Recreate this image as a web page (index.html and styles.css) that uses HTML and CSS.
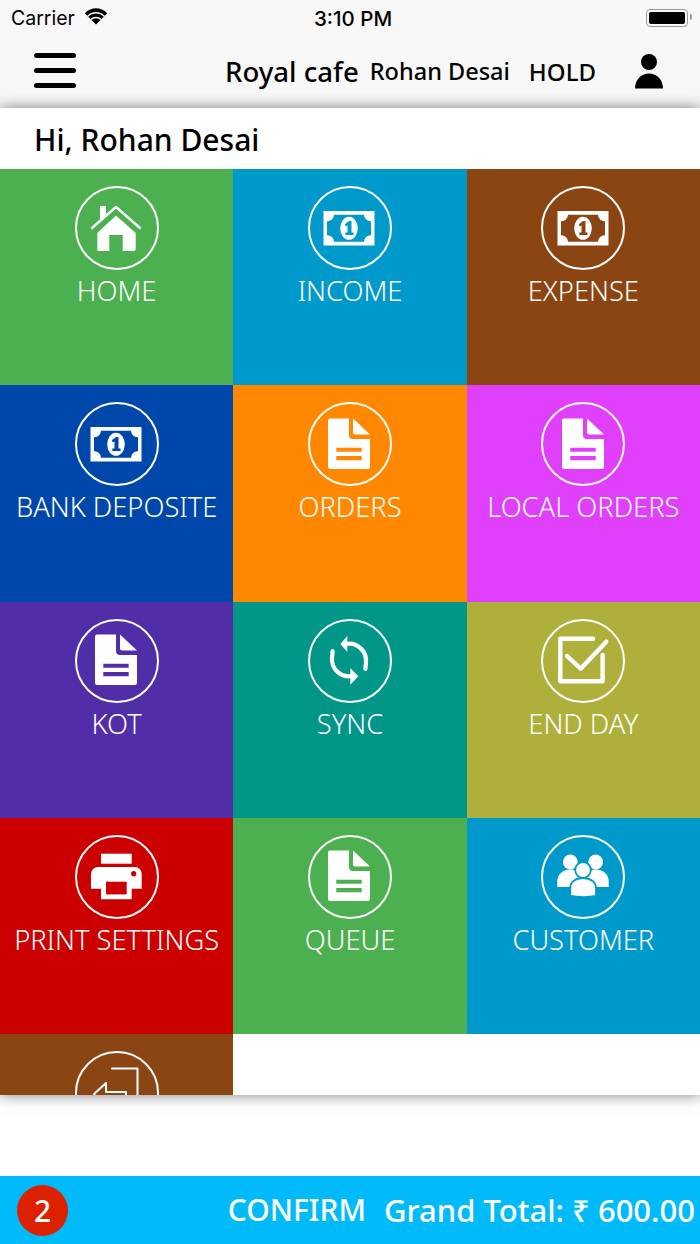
FILE: index.html
```html
<!DOCTYPE html>
<html lang="en">
<head>
  <meta charset="UTF-8" />
  <meta name="viewport" content="width=device-width, initial-scale=1.0" />
  <title>Royal cafe</title>
  <link rel="stylesheet" href="styles.css">
</head>
<body>
  <svg class="defs" width="0" height="0" aria-hidden="true">
    <symbol id="i-home" viewBox="0 0 84 84">
      <path class="fill" d="M26 20h6v8l-6 6z"/>
      <path class="line" d="M18 42L42 21l24 21" stroke-width="2.4"/>
      <path class="fill" fill-rule="evenodd" d="M42 29.5L61.7 47v16a2 2 0 0 1-2 2H24.300a1 1 0 0 1-1-1V47zM35.300 49v16h13.400V49z"/>
    </symbol>
    <symbol id="i-money" viewBox="0 0 84 84">
      <rect class="fill" x="16.500" y="25" width="51" height="34.500"/>
      <path class="hole" d="M27 28.800H57a6.500 6.500 0 0 0 7 6.500V49.200a6.500 6.500 0 0 0-7 6.500H27a6.500 6.500 0 0 0-7-6.500V35.300a6.500 6.500 0 0 0 7-6.500z"/>
      <ellipse class="fill" cx="42" cy="42.300" rx="8.800" ry="11.500"/>
      <path class="hole" d="M37.800 38.200l4.200-3.200h2.500v11.500h2v2.500h-8.200v-2.500h2.200v-7l-1.700 1z"/>
    </symbol>
    <symbol id="i-doc" viewBox="0 0 84 84">
      <path class="fill" fill-rule="evenodd" d="M23 16.500h19V33a4 4 0 0 0 4 4h17v28a2 2 0 0 1-2 2H23a2 2 0 0 1-2-2V18.500a2 2 0 0 1 2-2zM29.300 45.700v4h25.400v-4zM29.300 54v4.300h25.400V54z"/>
      <path class="fill" d="M46 16.500L63 32.500H48a2 2 0 0 1-2-2z"/>
    </symbol>
    <symbol id="i-sync" viewBox="0 0 84 84">
      <path class="line" d="M39 26A17 17 0 0 1 59 44l-.6 7" stroke-width="4.200" stroke-linecap="butt"/>
      <path class="fill" d="M40.300 18v16l-7-8z"/>
      <path class="line" d="M45 58A17 17 0 0 1 25 40l.6-7" stroke-width="4.200" stroke-linecap="butt"/>
      <path class="fill" d="M43.300 50v16.700l8-8.500z"/>
    </symbol>
    <symbol id="i-check" viewBox="0 0 84 84">
      <path class="line" d="M52 20.800H19.300V63.200H61.600V37" stroke-width="4.400"/>
      <path class="line" d="M26 38l13.700 12.700L65.300 23.700" stroke-width="4.400"/>
    </symbol>
    <symbol id="i-print" viewBox="0 0 84 84">
      <rect class="fill" x="27" y="19.700" width="30.700" height="10"/>
      <path class="fill" d="M24 33h37a6.700 6.700 0 0 1 6.700 6.700V54.700H57.700V65.300H27V54.700H17V40a7 7 0 0 1 7-7z"/>
      <rect class="hole" x="32" y="47.700" width="20.700" height="12.700"/>
      <circle class="hole" cx="59.700" cy="39.700" r="2.600"/>
    </symbol>
    <symbol id="i-people" viewBox="0 0 84 84">
      <circle class="fill" cx="29.300" cy="28" r="7.400"/>
      <circle class="fill" cx="54.700" cy="28" r="7.400"/>
      <path class="fill" d="M16.300 53v-6c0-7 6-11.500 13-11.500s13 4.500 13 11.500v6zM41.700 53v-6c0-7 6-11.500 13-11.500s13 4.500 13 11.500v6z"/>
      <path class="pad" d="M29.300 62V54c0-6 5-10 12.700-10s13 4 13 10v8c-8 1.500-17 1.500-25.700 0z"/>
      <circle class="pad" cx="42" cy="36" r="7.800"/>
    </symbol>
    <symbol id="i-logout" viewBox="0 0 84 84">
      <path class="line" d="M38 17.500H63.500V66H38" stroke-width="2"/>
      <path class="line" d="M20 43L32 32V41H52V53H32V62z" stroke-width="2"/>
    </symbol>
  </svg>

  <div class="phone">
    <!-- Status bar + nav -->
    <header class="top">
      <div class="status">
        <div class="status-left">
          <span>Carrier</span>
          <svg class="wifi" width="24" height="18" viewBox="0 0 24 18">
            <path d="M12 17.500L.8 6.300C7-.3 17-.3 23.200 6.300z" fill="#000"/>
            <path d="M3.800 9.300a11.500 11.500 0 0 1 16.400 0" fill="none" stroke="#f8f8f8" stroke-width="1.500"/>
            <path d="M7 12.500a7 7 0 0 1 10 0" fill="none" stroke="#f8f8f8" stroke-width="1.500"/>
          </svg>
        </div>
        <span class="clock">3:10 PM</span>
        <div class="battery"><i></i></div>
      </div>
      <nav class="nav">
        <div class="burger"><i></i><i></i><i></i></div>
        <div class="nav-right">
          <span class="shop">Royal cafe</span>
          <span class="user">Rohan Desai</span>
          <span class="hold">HOLD</span>
          <svg class="person" width="30" height="36" viewBox="0 0 30 36">
            <circle cx="15" cy="9" r="8"/>
            <path d="M1 35.500C1 27 7 20.500 15 20.500S29 27 29 35.500z"/>
          </svg>
        </div>
      </nav>
    </header>

    <main class="panel">
      <h1 class="hello">Hi, Rohan Desai</h1>
      <div class="tiles">
        <a class="tile c-green"><span class="ring"><svg><use href="#i-home"/></svg></span><span class="name">HOME</span></a>
        <a class="tile c-blue"><span class="ring"><svg><use href="#i-money"/></svg></span><span class="name">INCOME</span></a>
        <a class="tile c-brown"><span class="ring"><svg><use href="#i-money"/></svg></span><span class="name">EXPENSE</span></a>
        <a class="tile c-navy"><span class="ring"><svg><use href="#i-money"/></svg></span><span class="name">BANK DEPOSITE</span></a>
        <a class="tile c-orange"><span class="ring"><svg><use href="#i-doc"/></svg></span><span class="name">ORDERS</span></a>
        <a class="tile c-pink"><span class="ring"><svg><use href="#i-doc"/></svg></span><span class="name">LOCAL ORDERS</span></a>
        <a class="tile c-purple"><span class="ring"><svg><use href="#i-doc"/></svg></span><span class="name">KOT</span></a>
        <a class="tile c-teal"><span class="ring"><svg><use href="#i-sync"/></svg></span><span class="name">SYNC</span></a>
        <a class="tile c-olive"><span class="ring"><svg><use href="#i-check"/></svg></span><span class="name">END DAY</span></a>
        <a class="tile c-red"><span class="ring"><svg><use href="#i-print"/></svg></span><span class="name">PRINT SETTINGS</span></a>
        <a class="tile c-green"><span class="ring"><svg><use href="#i-doc"/></svg></span><span class="name">QUEUE</span></a>
        <a class="tile c-blue"><span class="ring"><svg><use href="#i-people"/></svg></span><span class="name">CUSTOMER</span></a>
        <a class="tile c-brown"><span class="ring"><svg><use href="#i-logout"/></svg></span></a>
      </div>
    </main>

    <footer class="bottom">
      <span class="badge">2</span>
      <div class="bottom-right">
        <span class="confirm">CONFIRM</span>
        <span class="total">Grand Total: ₹ 600.00</span>
      </div>
    </footer>
  </div>
</body>
</html>
```

FILE: styles.css
```css
html, body { margin:0; padding:0; height:100%; }
body {
  background:#fff;
  color:#000;
  font-family:"Noto Sans", sans-serif;
  overflow:hidden;
}
.defs { position:absolute; }
.phone {
  display:flex;
  flex-direction:column;
  height:1244px;
}

/* Status bar + nav */
.top {
  height:108px;
  flex:none;
  background:#f8f8f8;
}
.status {
  height:36px;
  padding:0 8px 0 11px;
  display:flex;
  align-items:center;
  justify-content:space-between;
  font-family:Inter, sans-serif;
  font-size:19.5px;
  position:relative;
}
.status-left { display:flex; align-items:center; gap:9px; }
.wifi { display:block; margin-top:-5px; }
.clock {
  position:absolute;
  left:314px;
  font-weight:500;
  font-size:20.5px;
}
.battery {
  width:36px;
  height:12px;
  padding:2px;
  margin-right:4px;
  border:1.5px solid #999;
  border-radius:4px;
  position:relative;
}
.battery i {
  display:block;
  height:100%;
  background:#000;
  border-radius:2px;
}
.battery::after {
  content:"";
  position:absolute;
  right:-5px;
  top:4px;
  width:2px;
  height:6px;
  background:#999;
  border-radius:0 2px 2px 0;
}
.nav {
  height:72px;
  padding:0 36px 0 34px;
  display:flex;
  align-items:flex-start;
  justify-content:space-between;
}
.burger {
  width:42px;
  padding-top:17px;
  display:flex;
  flex-direction:column;
  gap:10px;
}
.burger i {
  display:block;
  height:5px;
  background:#000;
  border-radius:3px;
}
.nav-right {
  display:flex;
  align-items:center;
  height:70px;
  font-weight:500;
}
.shop { font-size:27.6px; margin-right:11px; }
.user { font-size:23.5px; margin-right:19px; }
.hold { font-size:24px; margin-right:38px; }
.person { display:block; }

/* Main panel */
.panel {
  height:987px;
  flex:none;
  background:#fff;
  overflow:hidden;
  box-shadow:0 0 14px rgba(0,0,0,.5);
  position:relative;
}
.hello {
  height:61px;
  margin:0;
  padding-left:34px;
  font-size:30px;
  font-weight:500;
  line-height:63px;
}
.tiles {
  display:grid;
  grid-template-columns:repeat(3,1fr);
  grid-auto-rows:216.25px;
}
.tile {
  background:var(--tile);
  color:#fff;
  display:flex;
  flex-direction:column;
  align-items:center;
  padding-top:17px;
  box-sizing:border-box;
  min-width:0;
}
.ring {
  width:84px;
  height:84px;
  box-sizing:border-box;
  border:2.500px solid #fff;
  border-radius:50%;
  flex:none;
  position:relative;
}
.ring svg {
  position:absolute;
  left:-2.500px;
  top:-2.500px;
  width:84px;
  height:84px;
}
.name {
  font-size:27.3px;
  font-weight:300;
  line-height:38px;
  margin-top:2px;
  white-space:nowrap;
}
.fill { fill:#fff; }
.hole { fill:var(--tile); }
.pad { fill:#fff; stroke:var(--tile); stroke-width:1.800; }
.line {
  fill:none;
  stroke:#fff;
  stroke-linecap:round;
  stroke-linejoin:round;
}
.c-green { --tile:#4caf50; }
.c-blue { --tile:#0099cc; }
.c-brown { --tile:#8b4513; }
.c-navy { --tile:#0047ab; }
.c-orange { --tile:#ff8800; }
.c-pink { --tile:#e040fb; }
.c-purple { --tile:#512da8; }
.c-teal { --tile:#009688; }
.c-olive { --tile:#afb03c; }
.c-red { --tile:#cc0000; }

/* Bottom bar */
.bottom {
  margin-top:auto;
  height:68px;
  flex:none;
  background:#00bafa;
  color:#fff;
  display:flex;
  align-items:center;
  justify-content:space-between;
  padding:0 5px 0 17px;
  font-size:30px;
  font-weight:500;
}
.badge {
  width:51px;
  height:51px;
  border-radius:50%;
  background:#dc2000;
  display:flex;
  align-items:center;
  justify-content:center;
  font-size:30px;
}
.bottom-right { display:flex; gap:18px; }
.total { font-size:31px; }
```
